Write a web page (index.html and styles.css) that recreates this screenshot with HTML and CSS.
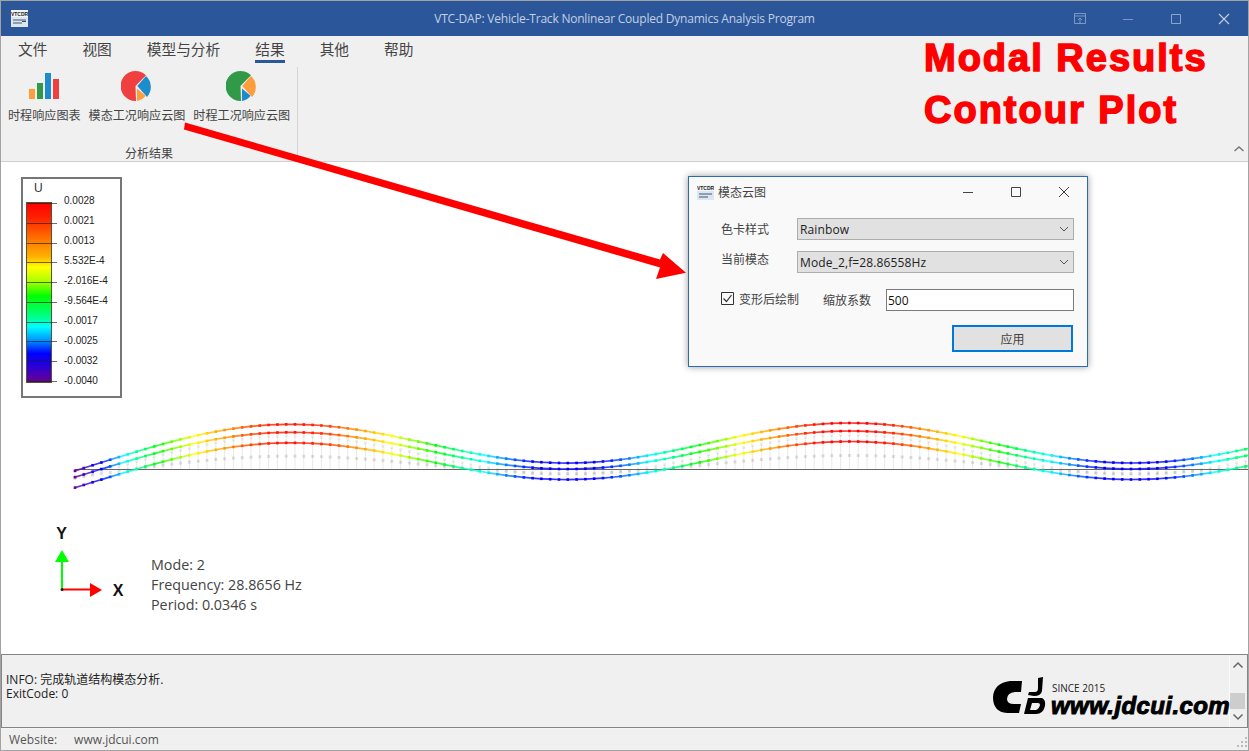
FILE: index.html
```html
<!DOCTYPE html>
<html lang="zh">
<head>
<meta charset="UTF-8">
<meta name="viewport" content="width=device-width, initial-scale=1.0">
<title>VTC-DAP</title>
<link rel="stylesheet" href="styles.css">
</head>
<body>
<div class="app">
  <header class="titlebar">
    <div class="titlebar-left">
      <svg class="app-icon" width="17" height="17" viewBox="0 0 17 17">
        <rect width="17" height="17" fill="#dbe6f2"/>
        <rect width="17" height="7" fill="#f4f4f4"/>
        <text x="8.5" y="5.6" text-anchor="middle" font-size="5" font-weight="700" font-family="Liberation Sans" fill="#222">VTCDR</text>
        <path d="M2 10h13M2 13h9" stroke="#77889a" stroke-width="1.4"/>
        <path d="M11 11.5h4" stroke="#445" stroke-width="1"/>
      </svg>
    </div>
    <div class="titlebar-text">VTC-DAP: Vehicle-Track Nonlinear Coupled Dynamics Analysis Program</div>
    <div class="titlebar-buttons">
      <span class="win-btn">
        <svg width="12" height="12" viewBox="0 0 12 12" fill="none" stroke="#7d9ac6"><path d="M.5.5h11v10H.5zM.5 3h11M6 10V5M4 7l2-2 2 2"/></svg>
      </span>
      <span class="win-btn">
        <svg width="12" height="12" viewBox="0 0 12 12" fill="none" stroke="#7d9ac6"><path d="M1 6.5h10"/></svg>
      </span>
      <span class="win-btn">
        <svg width="12" height="12" viewBox="0 0 12 12" fill="none" stroke="#8ba5cc"><path d="M1.5 1.5h9v9h-9z"/></svg>
      </span>
      <span class="win-btn">
        <svg width="12" height="12" viewBox="0 0 12 12" fill="none" stroke="#c3d0e4" stroke-width="1.1"><path d="M1 1l10 10M11 1L1 11"/></svg>
      </span>
    </div>
  </header>

  <nav class="menu">
    <span class="menu-item">文件</span>
    <span class="menu-item">视图</span>
    <span class="menu-item">模型与分析</span>
    <span class="menu-item active">结果</span>
    <span class="menu-item">其他</span>
    <span class="menu-item">帮助</span>
  </nav>

  <section class="ribbon">
    <div class="ribbon-group">
      <div class="ribbon-buttons">
        <div class="ribbon-btn">
          <svg width="32" height="32" viewBox="0 0 32 32">
            <rect x="1" y="19" width="6" height="10" fill="#ff9c3c"/>
            <rect x="9" y="13" width="6" height="16" fill="#309a49"/>
            <rect x="17" y="3" width="6" height="26" fill="#1e8bcd"/>
            <rect x="25" y="9" width="6" height="20" fill="#ef3f3f"/>
          </svg>
          <span>时程响应图表</span>
        </div>
        <div class="ribbon-btn">
          <svg width="32" height="32" viewBox="0 0 32 32">
            <path d="M14.5 16L25 5.2A15 15 0 1 0 15 31z" fill="#ef3f3f"/>
            <path d="M16.3 16L25 6A15 15 0 0 1 26 27z" fill="#1e8bcd"/>
            <path d="M16 18.5L24.6 25.7A15 15 0 0 1 16 31z" fill="#ff9c3c"/>
          </svg>
          <span>模态工况响应云图</span>
        </div>
        <div class="ribbon-btn">
          <svg width="32" height="32" viewBox="0 0 32 32">
            <path d="M14.5 16L25 5.2A15 15 0 1 0 15 31z" fill="#309a49"/>
            <path d="M16.3 16L25 6A15 15 0 0 1 26 27z" fill="#ff9c3c"/>
            <path d="M16 18.5L24.6 25.7A15 15 0 0 1 16 31z" fill="#1e8bcd"/>
          </svg>
          <span>时程工况响应云图</span>
        </div>
      </div>
      <div class="ribbon-group-name">分析结果</div>
    </div>
    <svg class="ribbon-collapse" width="12" height="8" viewBox="0 0 12 8" fill="none" stroke="#777" stroke-width="1.4"><path d="M1.5 6L6 2l4.5 4"/></svg>
  </section>

  <main class="canvas">
    <svg class="wave" id="wave" width="1247" height="100" viewBox="1 410 1247 100"></svg>

    <div class="legend">
      <div class="legend-title">U</div>
      <div class="legend-body">
        <div class="legend-bar">
          <i></i><i></i><i></i><i></i><i></i><i></i><i></i><i></i><i></i><i></i>
        </div>
        <div class="legend-labels">
          <span>0.0028</span>
          <span>0.0021</span>
          <span>0.0013</span>
          <span>5.532E-4</span>
          <span>-2.016E-4</span>
          <span>-9.564E-4</span>
          <span>-0.0017</span>
          <span>-0.0025</span>
          <span>-0.0032</span>
          <span>-0.0040</span>
        </div>
      </div>
    </div>

    <svg class="axes" width="90" height="90" viewBox="0 0 90 90">
      <text x="20.5" y="19" text-anchor="middle" class="axis-label">Y</text>
      <text x="77" y="76" text-anchor="middle" class="axis-label">X</text>
      <path d="M21 69.5V40" stroke="#00ff00" stroke-width="2" fill="none"/>
      <path d="M14 42L21 30l7 12z" fill="#00ff00"/>
      <path d="M21 69.5H50" stroke="#ff0000" stroke-width="2" fill="none"/>
      <path d="M49 63L61 70 49 77z" fill="#ff0000"/>
      <circle cx="21" cy="69.5" r="1.5" fill="#222"/>
    </svg>

    <div class="mode-info">
      <div>Mode: 2</div>
      <div>Frequency: 28.8656 Hz</div>
      <div>Period: 0.0346 s</div>
    </div>
  </main>

  <section class="log">
    <div class="log-text">
      <div>INFO: 完成轨道结构模态分析.</div>
      <div>ExitCode: 0</div>
    </div>
    <div class="scrollbar">
      <svg width="12" height="8" viewBox="0 0 12 8" fill="none" stroke="#666" stroke-width="1.5"><path d="M1.5 6.5L6 2l4.5 4.5"/></svg>
      <div class="scroll-track"><div class="scroll-thumb"></div></div>
      <svg width="12" height="8" viewBox="0 0 12 8" fill="none" stroke="#666" stroke-width="1.5"><path d="M1.5 1.5L6 6l4.5-4.5"/></svg>
    </div>
  </section>

  <footer class="status">
    <span>Website:</span>
    <span>www.jdcui.com</span>
    <svg class="grip" width="10" height="10" viewBox="0 0 10 10" fill="#bbb">
      <rect x="8" y="0" width="2" height="2"/><rect x="4" y="4" width="2" height="2"/><rect x="8" y="4" width="2" height="2"/>
      <rect x="0" y="8" width="2" height="2"/><rect x="4" y="8" width="2" height="2"/><rect x="8" y="8" width="2" height="2"/>
    </svg>
  </footer>

  <div class="dialog">
    <div class="dialog-title">
      <svg width="17" height="15" viewBox="0 0 17 15">
        <rect width="17" height="15" fill="#dbe6f2"/>
        <rect width="17" height="6" fill="#f4f4f4"/>
        <text x="8.5" y="5" text-anchor="middle" font-size="5" font-weight="700" font-family="Liberation Sans" fill="#222">VTCDR</text>
        <path d="M2 9h13M2 12h9" stroke="#77889a" stroke-width="1.3"/>
      </svg>
      <span class="dialog-name">模态云图</span>
      <span class="dialog-btn"><svg width="12" height="12" viewBox="0 0 12 12" fill="none" stroke="#444"><path d="M1 6.5h10"/></svg></span>
      <span class="dialog-btn"><svg width="12" height="12" viewBox="0 0 12 12" fill="none" stroke="#444"><path d="M1.5 1.5h9v9h-9z"/></svg></span>
      <span class="dialog-btn"><svg width="12" height="12" viewBox="0 0 12 12" fill="none" stroke="#444"><path d="M1 1l10 10M11 1L1 11"/></svg></span>
    </div>
    <div class="dialog-body">
      <div class="field-row">
        <label>色卡样式</label>
        <div class="combo"><span>Rainbow</span>
          <svg width="10" height="6" viewBox="0 0 10 6" fill="none" stroke="#555"><path d="M1 1l4 4 4-4"/></svg>
        </div>
      </div>
      <div class="field-row">
        <label class="label-high">当前模态</label>
        <div class="combo"><span>Mode_2,f=28.86558Hz</span>
          <svg width="10" height="6" viewBox="0 0 10 6" fill="none" stroke="#555"><path d="M1 1l4 4 4-4"/></svg>
        </div>
      </div>
      <div class="scale-row">
        <span class="check">
          <svg width="13" height="13" viewBox="0 0 13 13" fill="none"><path d="M.5.5h12v12H.5z" stroke="#333"/><path d="M2.5 6.5l3 3 5-6.5" stroke="#333" stroke-width="1.2"/></svg>
        </span>
        <span class="check-label">变形后绘制</span>
        <span class="scale-label">缩放系数</span>
        <input class="scale-input" type="text" value="500">
      </div>
      <div class="apply-row">
        <button class="apply">应用</button>
      </div>
    </div>
  </div>

  <div class="note">Modal Results<br>Contour Plot</div>

  <svg class="arrow" width="510" height="165" viewBox="180 118 510 165">
    <path d="M185 122.5L660 259.5 663 253 686 272.7 656 279 660 267.5 184 129.5z" fill="#ff0000"/>
  </svg>

  <div class="brand">
    <svg class="brand-mark" width="56" height="40" viewBox="992 677 56 40">
      <path d="M1022 681L1021 692 1015 692Q1007 693 1007 699 1007 704 1014 704L1021 704 1019 713 1007 713Q993 712 993 697 994 683 1010 681z"/>
      <path d="M1038 678L1043 677 1042 691Q1041 696 1034 696L1028 695 1029 692 1035 692Q1038 692 1038 688z"/>
      <path fill-rule="evenodd" d="M1028 698L1042 698Q1046 700 1045 706 1043 714 1036 714L1024 714zM1032 703L1030 710 1036 710Q1039 709 1040 705 1040 703 1038 703z"/>
    </svg>
    <span class="brand-since">SINCE 2015</span>
    <span class="brand-url">www.jdcui.com</span>
  </div>
</div>
<script src="script.js"></script>
</body>
</html>
```

FILE: styles.css
```css
* {
  box-sizing: border-box;
}
html, body {
  margin: 0;
  height: 100%;
  overflow: hidden;
}
body {
  font-family: "Open Sans", "Noto Sans CJK SC", sans-serif;
  font-size: 12px;
  color: #444;
}
.app {
  position: relative;
  width: 1249px;
  height: 751px;
  padding: 1px;
  background: #a3a3a3;
  display: flex;
  flex-direction: column;
  overflow: hidden;
}

/* title bar */
.titlebar {
  height: 35px;
  flex: none;
  background: #2b579a;
  display: grid;
  grid-template-columns: 1fr auto 1fr;
  align-items: center;
}
.titlebar-left {
  padding-left: 10px;
  display: flex;
}
.titlebar-text {
  color: #c3d0e4;
  font-size: 12px;
  letter-spacing: -.21px;
  white-space: nowrap;
}
.titlebar-buttons {
  display: flex;
  justify-content: flex-end;
}
.win-btn {
  width: 48px;
  height: 35px;
  display: flex;
  align-items: center;
  justify-content: center;
}

/* menu + ribbon */
.menu {
  height: 31px;
  flex: none;
  background: #f0f0f0;
  display: flex;
  gap: 35px;
  padding-left: 17px;
  font-family: "Noto Sans CJK SC", sans-serif;
  font-size: 14.7px;
  color: #444;
}
.menu-item {
  height: 27px;
  line-height: 26px;
}
.menu-item.active {
  border-bottom: 3px solid #2b579a;
}
.ribbon {
  height: 95px;
  flex: none;
  background: #f0f0f0;
  border-bottom: 1px solid #cfcfcf;
  display: flex;
  align-items: flex-start;
}
.ribbon-group {
  width: 297px;
  height: 90px;
  border-right: 1px solid #d4d4d4;
  display: flex;
  flex-direction: column;
}
.ribbon-buttons {
  display: flex;
  gap: 8px;
  padding-left: 7px;
  flex: 1;
}
.ribbon-btn {
  display: flex;
  flex-direction: column;
  align-items: center;
  padding-top: 3px;
  font-family: "Noto Sans CJK SC", sans-serif;
  font-size: 12.1px;
  white-space: nowrap;
}
.ribbon-btn span {
  margin-top: 4px;
  line-height: 18px;
}
.ribbon-group-name {
  text-align: center;
  font-family: "Noto Sans CJK SC", sans-serif;
  line-height: 18px;
  margin-bottom: -5px;
}
.ribbon-collapse {
  margin-left: auto;
  margin-right: 3px;
  margin-top: 78px;
}

/* main view */
.canvas {
  flex: 1;
  background: #fff;
  position: relative;
}
.wave {
  position: absolute;
  left: 0;
  top: 248px;
}
.legend {
  position: absolute;
  left: 20px;
  top: 15px;
  width: 101px;
  height: 221px;
  border: 2px solid #767676;
  background: #fff;
  padding-left: 3px;
}
.legend-title {
  height: 23px;
  padding-left: 8px;
  line-height: 18px;
  font-family: "Liberation Sans", sans-serif;
  font-size: 12px;
  color: #333;
}
.legend-body {
  display: flex;
}
.legend-bar {
  width: 26px;
  height: 181px;
  border: 1px solid #553;
  background: linear-gradient(to bottom, #ff0000 0%, #ff2000 8%, #ff8000 22%, #ffb000 30%, #ffff00 36%, #a8ff00 44%, #00ff00 52%, #00ff90 64%, #00ffff 69%, #0090ff 77%, #0000ff 84%, #2000e0 90%, #6a0090 100%);
  display: flex;
  flex-direction: column;
  justify-content: space-between;
}
.legend-bar i {
  display: block;
  width: 30px;
  height: 1px;
  background: rgba(30, 30, 30, .65);
  flex: none;
}
.legend-labels {
  margin-left: 12px;
  margin-top: -11px;
  display: flex;
  flex-direction: column;
  font-family: "Liberation Sans", sans-serif;
  font-size: 10px;
  color: #222;
}
.legend-labels span {
  height: 20px;
  line-height: 20px;
}
.axes {
  position: absolute;
  left: 40px;
  top: 358px;
}
.axis-label {
  font-family: "Liberation Sans", sans-serif;
  font-weight: 700;
  font-size: 16px;
  fill: #111;
}
.mode-info {
  position: absolute;
  left: 150px;
  top: 393px;
  font-size: 14.3px;
  line-height: 20px;
  color: #444;
}

/* log + status */
.log {
  height: 74px;
  flex: none;
  background: #f0f0f0;
  border: 1px solid #858585;
  display: flex;
  justify-content: space-between;
}
.log-text {
  padding: 18px 0 0 4px;
  line-height: 14px;
  color: #222;
}
.scrollbar {
  width: 18px;
  border-left: 1px solid #fafafa;
  display: flex;
  flex-direction: column;
  align-items: center;
  padding: 6px 2px 6px 0;
}
.scroll-track {
  flex: 1;
  width: 100%;
  padding-top: 24px;
}
.scroll-thumb {
  height: 16px;
  background: #cdcdcd;
}
.status {
  height: 22px;
  flex: none;
  background: #f0f0f0;
  border-top: 1px solid #f5f5f5;
  display: flex;
  align-items: center;
  gap: 17px;
  padding-left: 8px;
  color: #555;
  position: relative;
}
.grip {
  margin-left: auto;
  margin-right: 1px;
  align-self: flex-end;
  margin-bottom: 3px;
}

/* dialog */
.dialog {
  position: absolute;
  left: 688px;
  top: 176px;
  width: 400px;
  height: 191px;
  background: #f9f9f9;
  border: 1px solid #2b6cb0;
  box-shadow: 0 0 7px rgba(0, 0, 0, .4);
  font-family: "Noto Sans CJK SC", sans-serif;
}
.dialog-title {
  height: 30px;
  display: flex;
  align-items: center;
  padding: 0 0 0 8px;
}
.dialog-name {
  margin-left: 4px;
  margin-top: -2px;
  flex: 1;
}
.dialog-btn {
  width: 48px;
  height: 30px;
  display: flex;
  align-items: center;
  justify-content: center;
  position: relative;
  left: 1px;
}
.dialog-body {
  padding: 11px 13px 0 32px;
  font-family: "Open Sans", "Noto Sans CJK SC", sans-serif;
}
.field-row {
  display: flex;
  align-items: center;
  margin-bottom: 11px;
}
.field-row label {
  width: 76px;
}
.label-high {
  position: relative;
  top: -3px;
}
.combo {
  flex: 1;
  height: 22px;
  background: #e1e1e1;
  border: 1px solid #adadad;
  color: #222;
  padding-left: 2px;
  display: flex;
  justify-content: space-between;
  align-items: center;
}
.combo span {
  letter-spacing: .12px;
  padding-top: 1px;
}
.combo svg {
  margin-right: 4px;
}
.scale-row {
  display: flex;
  align-items: center;
  margin-top: 16px;
}
.check {
  display: flex;
  margin-top: -3px;
}
.check-label {
  margin-left: 5px;
  margin-top: -3px;
  width: 84px;
}
.scale-label {
  width: 63px;
}
.scale-input {
  flex: 1;
  height: 22px;
  border: 1px solid #7a7a7a;
  background: #fff;
  padding: 0 1px;
  font: inherit;
  color: #111;
  outline: none;
}
.apply-row {
  display: flex;
  justify-content: flex-end;
  margin-top: 14px;
  padding-right: 1px;
}
.apply {
  width: 121px;
  height: 27px;
  background: #e1e1e1;
  border: 2px solid #0078d7;
  font: inherit;
  color: #444;
  padding: 0;
}

/* overlays */
.note {
  position: absolute;
  left: 924px;
  top: 32px;
  font-family: "Liberation Sans", sans-serif;
  font-weight: 700;
  font-size: 38px;
  line-height: 52px;
  letter-spacing: 2px;
  -webkit-text-stroke: 1.5px #ff0000;
  color: #ff0000;
  white-space: nowrap;
}
.arrow {
  position: absolute;
  left: 180px;
  top: 118px;
}
.brand {
  position: absolute;
  left: 992px;
  top: 677px;
  width: 240px;
  height: 45px;
  color: #000;
}
.brand-mark {
  display: block;
}
.brand-since {
  position: absolute;
  left: 60px;
  top: 5px;
  font-size: 10px;
  line-height: 12px;
  color: #222;
  white-space: nowrap;
}
.brand-url {
  position: absolute;
  left: 59px;
  top: 17px;
  font-family: "Liberation Sans", sans-serif;
  font-weight: 700;
  font-style: italic;
  font-size: 24px;
  line-height: 24px;
  letter-spacing: .4px;
  -webkit-text-stroke: 1px #000;
  white-space: nowrap;
}
```

FILE: script.js
```js
// mode shape: three rail layers, coloured by displacement like the legend
var PERIOD = 565;
var PEAK_X = 850;
var START_X = 75;
var STEP = 8.8;
var END_X = 1252;

var layers = [
  { mid: 443, amp: 20 },
  { mid: 450, amp: 19 },
  { mid: 460.5, amp: 19 }
];

var stops = [
  [0, [106, 0, 144]],
  [0.12, [20, 0, 240]],
  [0.18, [0, 0, 255]],
  [0.32, [0, 255, 255]],
  [0.53, [0, 255, 0]],
  [0.73, [255, 255, 0]],
  [0.88, [255, 128, 0]],
  [0.97, [255, 20, 0]],
  [1, [255, 0, 0]]
];

function shape(x) {
  return Math.cos(2 * Math.PI * (x - PEAK_X) / PERIOD);
}

function endLift(x) {
  return 14 * Math.exp(-(x - START_X) / 90);
}

function colorAt(x) {
  var d = shape(x) - endLift(x) / 20;
  var t = Math.max(0, Math.min(1, (d + 1.375) / 2.375));
  for (var i = 1; i < stops.length; i++) {
    if (t <= stops[i][0]) {
      var a = stops[i - 1], b = stops[i];
      var k = (t - a[0]) / (b[0] - a[0]);
      var c = a[1].map(function (v, n) { return Math.round(v + (b[1][n] - v) * k); });
      return 'rgb(' + c.join(',') + ')';
    }
  }
  return 'rgb(255,0,0)';
}

function layerY(layer, x) {
  return layer.mid - layer.amp * shape(x) + endLift(x);
}

function drawWave() {
  var out = '';
  var x;

  // undeformed mesh, very faint
  for (x = START_X; x < END_X; x += STEP) {
    var top = 455 - 20 * shape(x) + endLift(x) * 0.7;
    out += '<line x1="' + x + '" y1="469" x2="' + x + '" y2="' + top + '" stroke="#000" stroke-opacity=".09"/>';
    out += '<rect x="' + (x - 1.5) + '" y="' + (464.5 - 9 * shape(x) + endLift(x) * 0.5 - 1.5) + '" width="3" height="3" fill="#000" fill-opacity=".12"/>';
    out += '<rect x="' + (x - 1.5) + '" y="' + (top - 1.5) + '" width="3" height="3" fill="#000" fill-opacity=".07"/>';
  }
  out += '<line x1="' + START_X + '" y1="469.5" x2="1248" y2="469.5" stroke="#666"/>';

  layers.forEach(function (layer) {
    for (x = START_X; x < END_X; x += STEP) {
      var c = colorAt(x + STEP / 2);
      out += '<line x1="' + x + '" y1="' + layerY(layer, x) + '" x2="' + (x + STEP) + '" y2="' + layerY(layer, x + STEP) + '" stroke="' + c + '" stroke-width="1.7" stroke-opacity=".8"/>';
      out += '<rect x="' + (x - 1.3) + '" y="' + (layerY(layer, x) - 1.3) + '" width="2.6" height="2.6" fill="' + colorAt(x) + '"/>';
    }
  });

  document.getElementById('wave').innerHTML = out;
}

drawWave();
```
